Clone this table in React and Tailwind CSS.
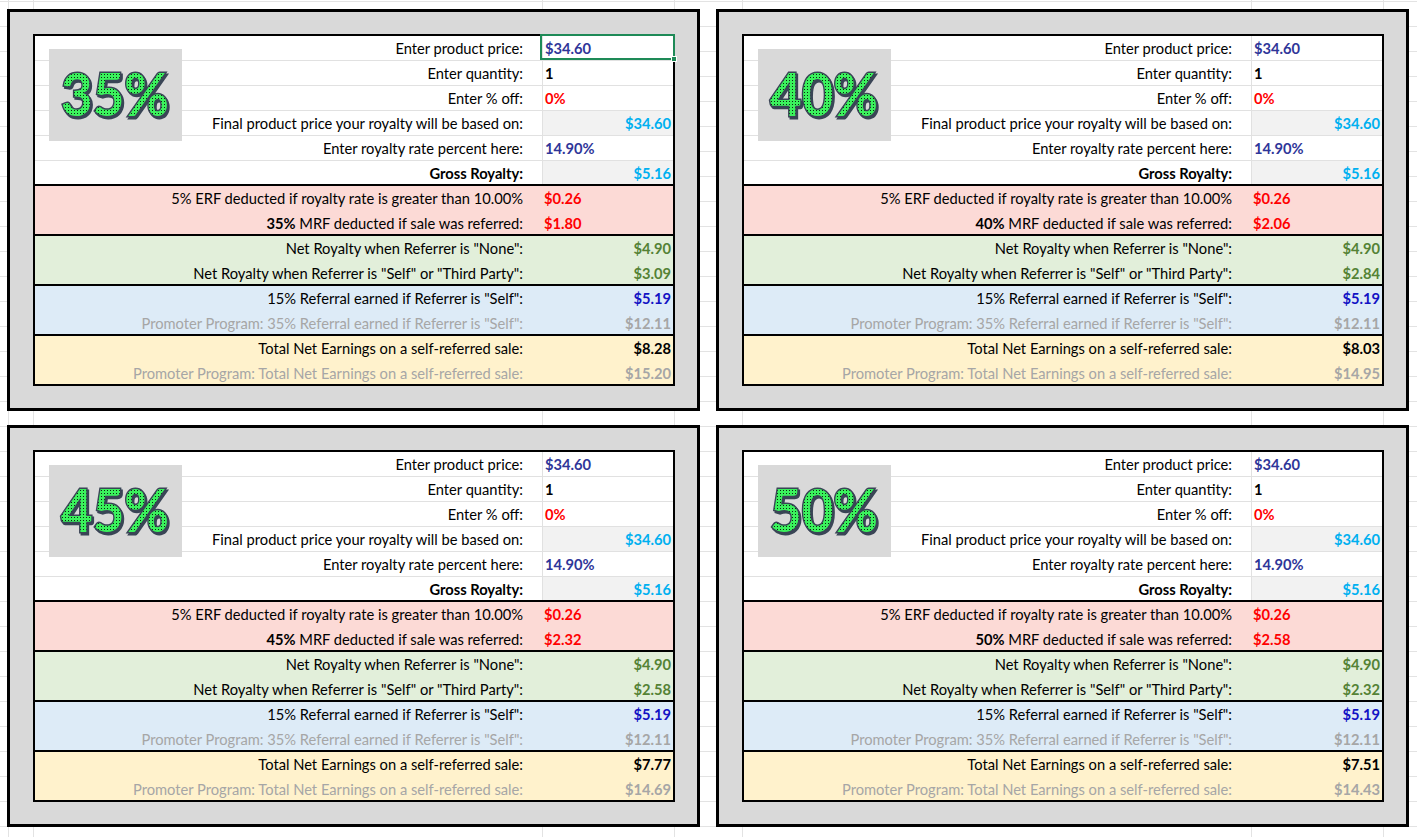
import React from "react";

const CARDS = [
  { id: "a", pct: "35%", mrf: "$1.80", netSelf: "$3.09", total: "$8.28", promoTotal: "$15.20", selected: true },
  { id: "b", pct: "40%", mrf: "$2.06", netSelf: "$2.84", total: "$8.03", promoTotal: "$14.95" },
  { id: "c", pct: "45%", mrf: "$2.32", netSelf: "$2.58", total: "$7.77", promoTotal: "$14.69" },
  { id: "d", pct: "50%", mrf: "$2.58", netSelf: "$2.32", total: "$7.51", promoTotal: "$14.43" },
];

const BLUE = "text-[#2f3699]";
const CYAN = "text-[#00b0f0]";
const RED = "text-[#ff0000]";
const GREEN = "text-[#548235]";
const GREY = "text-[#a6a6a6]";

function Badge({ id, pct }) {
  return (
    <div className="absolute left-[14px] top-[13px] h-[92px] w-[133px] bg-[#d9d9d9]">
      <svg width="133" height="92" viewBox="0 0 133 92" overflow="visible">
        <defs>
          <pattern id={`dots-${id}`} width="3" height="3" patternUnits="userSpaceOnUse">
            <rect width="3" height="3" fill="#3af25c" />
            <rect x="1" y="1" width="1" height="1" fill="#0d2614" />
          </pattern>
        </defs>
        <text
          x="13.5"
          y="68.5"
          textLength="108"
          lengthAdjust="spacingAndGlyphs"
          fontFamily="Lato, sans-serif"
          fontWeight="700"
          fontSize="60"
          fill="#3a4556"
          stroke="#3a4556"
          strokeWidth="3"
        >
          {pct}
        </text>
        <text
          x="12"
          y="67"
          textLength="108"
          lengthAdjust="spacingAndGlyphs"
          fontFamily="Lato, sans-serif"
          fontWeight="700"
          fontSize="60"
          fill={`url(#dots-${id})`}
          stroke="#3a4556"
          strokeWidth="3"
          paintOrder="stroke"
        >
          {pct}
        </text>
      </svg>
    </div>
  );
}

// one spreadsheet row: right-aligned label, value cell on the right
function Row({ label, value, valueClass = "", right, last, grid, cellBg = "", children }) {
  return (
    <div className={`flex ${last ? "h-[23px]" : "h-[25px]"} ${grid && !last ? "border-b border-[#e1e1e1]" : ""}`}>
      <div className="flex-1 whitespace-nowrap pr-[19px] text-right">{label}</div>
      <div
        className={`relative w-[131px] whitespace-nowrap font-bold ${grid ? "border-l border-[#e1e1e1]" : ""} ${
          right ? "pr-[2px] text-right" : "pl-[2px]"
        } ${cellBg} ${valueClass}`}
      >
        {value}
        {children}
      </div>
    </div>
  );
}

function Selection() {
  return (
    <div className="absolute -left-[3px] -right-[2px] -top-[2px] bottom-0 border-2 border-[#1e8a57]">
      <div className="absolute -bottom-[4px] -right-[4px] h-[6px] w-[6px] border border-white bg-[#1e8a57]" />
    </div>
  );
}

function Card({ card }) {
  return (
    <div className="border-[3px] border-black bg-[#d9d9d9] pl-[23px] pt-[22px]">
      <div className="relative w-[642px] border-x-2 border-t-2 border-black leading-[25px] text-black">
        <div className="border-b-2 border-black bg-white">
          <Row grid label="Enter product price:" value="$34.60" valueClass={BLUE}>
            {card.selected && <Selection />}
          </Row>
          <Row grid label="Enter quantity:" value="1" />
          <Row grid label="Enter % off:" value="0%" valueClass={RED} />
          <Row
            grid
            label="Final product price your royalty will be based on:"
            value="$34.60"
            valueClass={CYAN}
            cellBg="bg-[#f2f2f2]"
            right
          />
          <Row grid label="Enter royalty rate percent here:" value="14.90%" valueClass={BLUE} />
          <Row
            grid
            last
            label={<span className="font-bold">Gross Royalty:</span>}
            value="$5.16"
            valueClass={CYAN}
            cellBg="bg-[#f2f2f2]"
            right
          />
        </div>

        <div className="border-b-2 border-black bg-[#fcdad6]">
          <Row label="5% ERF deducted if royalty rate is greater than 10.00%" value="$0.26" valueClass={RED} />
          <Row
            last
            label={
              <>
                <span className="font-bold">{card.pct}</span> MRF deducted if sale was referred:
              </>
            }
            value={card.mrf}
            valueClass={RED}
          />
        </div>

        <div className="border-b-2 border-black bg-[#e2efda]">
          <Row label={'Net Royalty when Referrer is "None":'} value="$4.90" valueClass={GREEN} right />
          <Row
            last
            label={'Net Royalty when Referrer is "Self" or "Third Party":'}
            value={card.netSelf}
            valueClass={GREEN}
            right
          />
        </div>

        <div className="border-b-2 border-black bg-[#ddebf7]">
          <Row label={'15% Referral earned if Referrer is "Self":'} value="$5.19" valueClass="text-[#1212c4]" right />
          <Row
            last
            label={<span className={GREY}>Promoter Program: 35% Referral earned if Referrer is "Self":</span>}
            value="$12.11"
            valueClass={GREY}
            right
          />
        </div>

        <div className="border-b-2 border-black bg-[#fff2cc]">
          <Row label="Total Net Earnings on a self-referred sale:" value={card.total} right />
          <Row
            last
            label={<span className={GREY}>Promoter Program: Total Net Earnings on a self-referred sale:</span>}
            value={card.promoTotal}
            valueClass={GREY}
            right
          />
        </div>

        <Badge id={card.id} pct={card.pct} />
      </div>
    </div>
  );
}

export default function App() {
  return (
    <div className="h-[837px] w-[1417px] overflow-hidden bg-white pl-[7px] pt-[9px] font-['Lato',sans-serif] text-[14.7px] [background-image:linear-gradient(to_right,transparent_8px,#e3e3e3_8px_9px,transparent_9px_33px,#e3e3e3_33px_34px,transparent_34px_542px,#e3e3e3_542px_543px,transparent_543px_674px,#e3e3e3_674px_675px,transparent_675px_742px,#e3e3e3_742px_743px,transparent_743px_1251px,#e3e3e3_1251px_1252px,transparent_1252px_1383px,#e3e3e3_1383px_1384px,transparent_1384px),repeating-linear-gradient(to_bottom,#e3e3e3_0_1px,transparent_1px_25px)] [background-position:0_0,0_1px]">
      <div className="grid grid-cols-[693px_693px] grid-rows-[402px_402px] gap-x-[16px] gap-y-[14px]">
        {CARDS.map((card) => (
          <Card key={card.id} card={card} />
        ))}
      </div>
    </div>
  );
}
